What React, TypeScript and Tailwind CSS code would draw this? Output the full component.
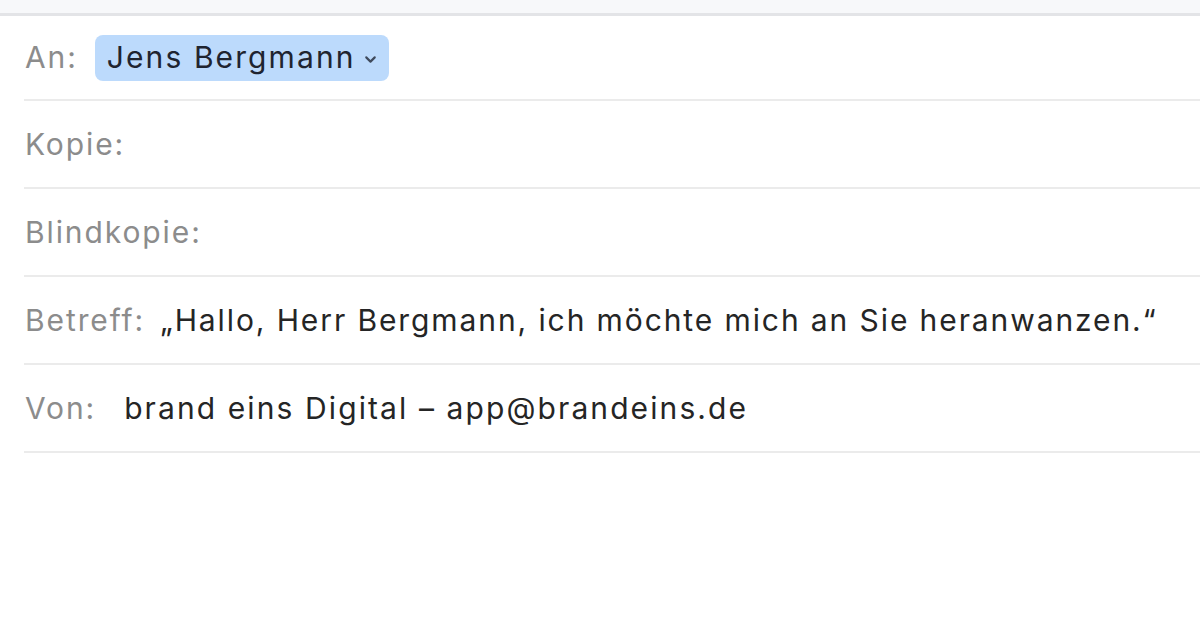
import { ChevronDown } from 'lucide-react';

const rows = [
  { label: 'Kopie:' },
  { label: 'Blindkopie:' },
  { label: 'Betreff:', value: '„Hallo, Herr Bergmann, ich möchte mich an Sie heranwanzen.“', gap: 'ml-[15px]' },
  { label: 'Von:', value: 'brand eins Digital – app@brandeins.de', gap: 'ml-[28px] tracking-[2.1px]' },
];

export default function App() {
  return (
    <div className="w-[1200px] h-[630px] bg-white overflow-hidden font-['Inter','Liberation_Sans',sans-serif] text-[30px] tracking-[1.9px]">
      <div className="h-[13px] bg-[#f7f8fa] border-b-[3px] border-[#e3e4e7] box-content" />
      <div className="pl-6">
        {/* An */}
        <div className="h-[85px] border-b-2 border-[#ebebeb] flex items-center">
          <span className="text-[#8c8c8c] pl-px">An:</span>
          <span className="ml-[17px] h-[46px] pl-3 pr-[10px] rounded-lg bg-[#bcdafc] text-[#1f2430] flex items-center gap-[6px] tracking-[2.1px]">
            Jens Bergmann
            <ChevronDown size={17} strokeWidth={3} className="text-[#3f4a5c] mt-1" />
          </span>
        </div>
        {rows.map((r) => (
          <div key={r.label} className="h-[88px] border-b-2 border-[#ebebeb] flex items-center">
            <span className="text-[#8c8c8c] pl-px">{r.label}</span>
            {r.value && <span className={`${r.gap} text-[#252525]`}>{r.value}</span>}
          </div>
        ))}
      </div>
    </div>
  );
}
